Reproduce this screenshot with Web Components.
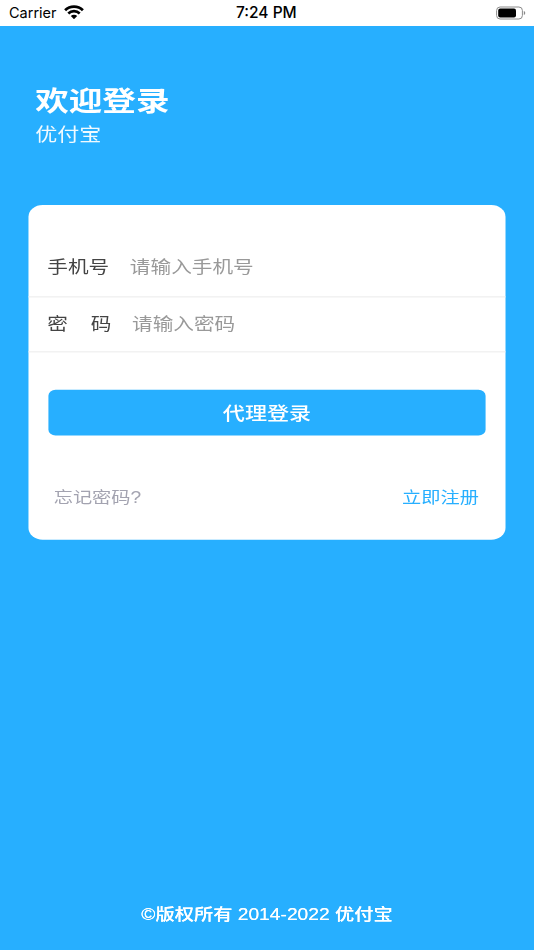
<!DOCTYPE html>
<html lang="zh"><head><meta charset="utf-8"><title>欢迎登录</title>
<style>
html,body{margin:0;padding:0;height:100%;overflow:hidden;background:#27afff}
body{display:flex;flex-direction:column;width:534px;height:950px;font-family:"Liberation Sans","Noto Sans CJK SC",sans-serif}
</style></head><body>
<status-bar></status-bar>
<login-page>
  <login-header slot="header" title-text="欢迎登录" sub-text="优付宝"></login-header>
  <login-card slot="card">
    <form-row label="手机号" hint="请输入手机号"></form-row>
    <form-row label="密　码" hint="请输入密码" nudge></form-row>
    <login-button>代理登录</login-button>
    <link-row left-text="忘记密码?" right-text="立即注册"></link-row>
  </login-card>
  <span slot="footer">©版权所有 2014-2022 优付宝</span>
</login-page>
<script>
function def(name, html, init){
  customElements.define(name, class extends HTMLElement{
    constructor(){super();this.attachShadow({mode:'open'}).innerHTML=html;}
    connectedCallback(){ if(init) init(this, this.shadowRoot); }
  });
}
def('status-bar',`<style>
:host{display:flex;flex:none;height:26px;background:#fff;align-items:center;justify-content:space-between;color:#000;font-family:Inter,"Liberation Sans",sans-serif;position:relative;box-sizing:border-box;padding:0 8px 0 9px}
.l{display:flex;align-items:center;gap:7px;font-size:14.5px;line-height:26px}
.t{font-size:15.5px;font-weight:500;line-height:26px;position:absolute;left:236px;top:0}
svg{display:block}
</style>
<div class="l"><span>Carrier</span>
<svg width="20" height="15" viewBox="0 0 20 15" style="margin-top:-3px"><path d="M1.100 6.300A12.600 12.600 0 0 1 18.900 6.300" fill="none" stroke="#000" stroke-width="2.700"/><path d="M4.300 9.500A8 8 0 0 1 15.700 9.500" fill="none" stroke="#000" stroke-width="2.600"/><path d="M6.800 12.100a4.500 4.500 0 0 1 6.400 0L10 15.200z" fill="#000"/></svg></div>
<span class="t">7:24 PM</span>
<svg width="30" height="14" viewBox="0 0 30 14"><rect x=".6" y="1" width="25.800" height="12" rx="3.500" fill="none" stroke="#8a8a8a" stroke-width="1"/><rect x="2.200" y="2.600" width="17.800" height="8.800" rx="2" fill="#000"/><path d="M27.800 5v4c.9-.3 1.400-1.100 1.400-2s-.5-1.700-1.400-2z" fill="#8a8a8a"/></svg>`);

def('login-page',`<style>
:host{display:block;flex:none;width:534px;height:924px;overflow:hidden;background:#27afff}
.stage{width:375px;height:790px;transform:scale(1.424,1.17);transform-origin:0 0;display:flex;flex-direction:column;box-sizing:border-box;padding:0 19.700px;filter:blur(.28px)}
footer{margin-top:auto;padding-bottom:22.500px;text-align:center;color:#fff;font-size:13.500px;font-weight:500;line-height:16px;text-shadow:0 0 .4px #fff}
</style>
<div class="stage"><slot name="header"></slot><slot name="card"></slot><footer><slot name="footer"></slot></footer></div>`);

def('login-header',`<style>
:host{display:block;padding:51px 0 0 5px;height:153px;box-sizing:border-box;color:#fff}
h1{margin:0;font-size:23.600px;font-weight:700;line-height:28px}
p{margin:4.400px 0 0;font-size:15.500px;line-height:20px;font-weight:400;color:#f0faff}
</style><h1></h1><p></p>`,(el,s)=>{s.querySelector('h1').textContent=el.getAttribute('title-text');s.querySelector('p').textContent=el.getAttribute('sub-text');});

def('login-card',`<style>
:host{display:flex;flex-direction:column;background:#fff;border-radius:10px;height:286px;box-sizing:border-box;padding-top:31.800px}
</style><slot></slot>`);

def('form-row',`<style>
:host{display:flex;align-items:center;height:47px;box-sizing:border-box;border-bottom:1px solid #eee;padding:0 14px 6px 13.500px;font-size:14.500px;flex:none}
.k{color:#444;width:58px;flex:none;white-space:pre}
:host([nudge]) .k{width:59.500px;letter-spacing:.8px}
:host([nudge]){padding-bottom:2.500px}
.v{color:#999}
</style><span class="k"></span><span class="v"></span>`,(el,s)=>{s.querySelector('.k').textContent=el.getAttribute('label');s.querySelector('.v').textContent=el.getAttribute('hint');});

def('login-button',`<style>
:host{display:flex;flex:none;align-items:center;justify-content:center;height:38.800px;margin:32.200px 14px 0;background:#27afff;border-radius:5px;color:#fff;font-size:15.500px;font-weight:500}
</style><slot></slot>`);

def('link-row',`<style>
:host{display:flex;flex:none;justify-content:space-between;align-items:center;padding:0 19px 0 18px;margin-top:40.400px;height:24px;font-size:13.500px}
.a{color:#a3a3b0}.b{color:#27afff}
</style><span class="a"></span><span class="b"></span>`,(el,s)=>{s.querySelector('.a').textContent=el.getAttribute('left-text');s.querySelector('.b').textContent=el.getAttribute('right-text');});
</script>
</body></html>
